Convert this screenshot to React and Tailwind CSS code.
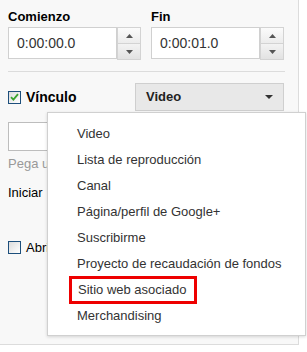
import React from "react";

const font = { fontFamily: '"Liberation Sans", Arial, sans-serif' };

function Spin() {
  return (
    <div className="flex flex-col w-[24px] h-[33px]">
      <div className="flex-1 flex items-center justify-center border border-[#d3d3d3] bg-gradient-to-b from-[#fbfbfb] to-[#ececec]">
        <svg width="7" height="4" viewBox="0 0 7 4"><path d="M3.5 0L7 4H0z" fill="#555" /></svg>
      </div>
      <div className="flex-1 flex items-center justify-center border border-t-0 border-[#d3d3d3] bg-gradient-to-b from-[#f3f3f3] to-[#e2e2e2]">
        <svg width="7" height="4" viewBox="0 0 7 4"><path d="M0 0H7L3.5 4z" fill="#555" /></svg>
      </div>
    </div>
  );
}

function TimeField({ label, value }) {
  return (
    <div className="flex flex-col w-[133px]">
      <div className="h-[20px] text-[13px] font-bold text-black leading-[20px]">{label}</div>
      <div className="flex">
        <div className="w-[109px] h-[32px] border border-[#d0d0d0] bg-white flex items-center pl-[8px] text-[14px] text-[#333]">
          {value}
        </div>
        <Spin />
      </div>
    </div>
  );
}

function Check({ checked }) {
  return (
    <div className="w-[13px] h-[13px] shrink-0 border border-[#1d4f7c] bg-gradient-to-br from-[#dcdcdc] to-white flex items-center justify-center">
      {checked && (
        <svg width="9" height="8" viewBox="0 0 9 8">
          <path d="M1 4.2L3.4 6.6L8 1.2" stroke="#3aa32e" strokeWidth="1.8" fill="none" />
        </svg>
      )}
    </div>
  );
}

const items = [
  "Video",
  "Lista de reproducción",
  "Canal",
  "Página/perfil de Google+",
  "Suscribirme",
  "Proyecto de recaudación de fondos",
  "Sitio web asociado",
  "Merchandising",
];

export default function App() {
  return (
    <div className="relative w-[307px] h-[352px] bg-white overflow-hidden" style={font}>
      <div className="w-[299px] h-[345px] bg-[#f8f8f8] border-r border-b border-[#dcdcdc] pt-[7px] pl-[8px] pr-[14px]">
        <div className="flex gap-[10px]">
          <TimeField label="Comienzo" value="0:00:00.0" />
          <TimeField label="Fin" value="0:00:01.0" />
        </div>
        <div className="mt-[11px] h-px bg-[#dcdcdc] w-[277px]" />
        <div className="mt-[11px] flex items-center h-[28px]">
          <div className="flex items-center gap-[5px] w-[127px]">
            <Check checked />
            <span className="text-[14px] font-bold text-black">Vínculo</span>
          </div>
          <div className="w-[149px] h-[28px] border border-[#cfcfcf] bg-[#e8e8e8] flex items-center justify-between pl-[10px] pr-[10px]">
            <span className="text-[13px] font-bold text-[#222]">Video</span>
            <svg width="8" height="4" viewBox="0 0 8 4"><path d="M0 0H8L4 4z" fill="#333" /></svg>
          </div>
        </div>
        <div className="mt-[11px] w-[276px] h-[29px] border border-[#bdbdbd] bg-white" />
        <div className="mt-[5px] w-[39px] overflow-hidden whitespace-nowrap text-[13px] text-[#999] leading-[16px]">Pega una URL aquí</div>
        <div className="mt-[13px] w-[39px] overflow-hidden whitespace-nowrap text-[13px] text-black leading-[16px]">Iniciar</div>
        <div className="mt-[37px] flex items-center gap-[5px] w-[39px] overflow-hidden">
          <Check />
          <span className="text-[13px] text-black whitespace-nowrap">Abrir en una nueva ventana</span>
        </div>
      </div>
      <div className="absolute left-[47px] top-[112px] w-[259px] h-[224px] bg-white border border-[#d0d0d0] shadow-[0_1px_3px_rgba(0,0,0,0.15)] pt-[8px] flex flex-col">
        {items.map((t) =>
          t === "Sitio web asociado" ? (
            <div key={t} className="h-[26px] flex items-center text-[13px] text-[#333]">
              <div className="ml-[21px] -mt-[1px] border-[3px] border-[#ee0000] h-[28px] flex items-center pl-[6px] pr-[8px]">
                {t}
              </div>
            </div>
          ) : (
            <div key={t} className="h-[26px] flex items-center text-[13px] text-[#333] pl-[29px]">
              {t}
            </div>
          )
        )}
      </div>
    </div>
  );
}
